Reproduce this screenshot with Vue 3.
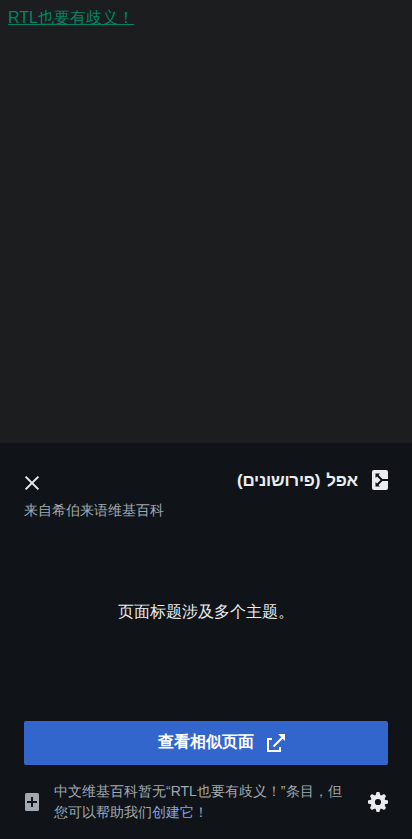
<script setup>
const message = '页面标题涉及多个主题。'
</script>

<template>
  <div class="screen">
    <main class="page">
      <a class="entry" href="#">RTL也要有歧义！</a>
    </main>
    <section class="panel">
      <header class="head">
        <svg class="close" width="20" height="20" viewBox="0 0 20 20" aria-hidden="true">
          <path d="m3.6 3.6 12.8 12.8M16.4 3.6 3.6 16.4" />
        </svg>
        <h1 class="title" dir="rtl">אפל (פירושונים)</h1>
        <svg class="disambig" width="16" height="20" viewBox="0 0 16 20" aria-hidden="true">
          <rect width="16" height="20" rx="2" fill="#eaecf0" />
          <path class="branch" d="M16 10H9.5M5 5l5 5-5 5" />
          <path class="tips" d="M3.5 3.5H8L3.5 8zM3.5 16.5V12L8 16.5z" />
        </svg>
      </header>
      <p class="source">来自希伯来语维基百科</p>
      <p class="message">{{ message }}</p>
      <button class="action" type="button">
        <span class="label">查看相似页面</span>
        <svg width="20" height="20" viewBox="0 0 20 20" fill="#fff" aria-hidden="true">
          <path d="M1 5h5v2H3v10h10v-3h2v5H1z" />
          <path d="M12 1h7v7l-2.3-2.3-8.5 8.5-1.4-1.4 8.5-8.5z" />
        </svg>
      </button>
      <footer class="foot">
        <svg class="add" width="16" height="20" viewBox="0 0 16 20" aria-hidden="true">
          <rect x="1" y="1" width="14" height="18" rx="1.5" fill="#a2a9b1" />
          <path d="M3 10h10M8 5v10" stroke="#101418" stroke-width="2" />
        </svg>
        <p class="note">中文维基百科暂无“RTL也要有歧义！”条目，但您可以帮助我们<a href="#">创建它</a>！</p>
        <svg class="gear" width="20" height="20" viewBox="0 0 20 20" fill="#eaecf0" aria-hidden="true">
          <g>
            <path v-for="n in 4" :key="n" d="M7.7 3 8.6 0h2.8l.9 3v14l-.9 3H8.6l-.9-3z" :transform="`rotate(${n * 45} 10 10)`" />
          </g>
          <circle cx="10" cy="10" r="7.3" />
          <circle cx="10" cy="10" r="3.1" fill="#101418" />
        </svg>
      </footer>
    </section>
  </div>
</template>

<style>
body {
  margin: 0;
  background: #101418;
}
</style>

<style scoped>
.screen {
  display: flex;
  flex-direction: column;
  height: 839px;
  overflow: hidden;
  font-family: "Liberation Sans", sans-serif;
  background: #101418;
}
.page {
  height: 443px;
  box-sizing: border-box;
  padding: 8px;
  background: #1c1d1e;
  font-size: 16px;
  line-height: 19px;
}
.entry {
  color: #008565;
}
.panel {
  display: flex;
  flex: 1;
  flex-direction: column;
  box-sizing: border-box;
  padding: 24px 24px 0;
}
.head {
  display: flex;
  height: 32px;
}
.close {
  margin: 6px 0 0 -2px;
  fill: none;
  stroke: #eaecf0;
  stroke-width: 2;
}
.title {
  flex: 1;
  margin: 0 14px 0 0;
  color: #eaecf0;
  font-size: 17px;
  font-weight: 700;
  line-height: 27px;
  letter-spacing: -0.22px;
  word-spacing: 1.6px;
}
.disambig {
  margin-top: 2.5px;
}
.branch {
  fill: none;
  stroke: #101418;
  stroke-width: 2;
}
.tips {
  fill: #101418;
}
.source {
  margin: 0;
  color: #a2a9b1;
  font-size: 14px;
  line-height: 22px;
}
.message {
  display: flex;
  align-items: center;
  justify-content: center;
  height: 182px;
  margin: 0 0 18px;
  color: #eaecf0;
  font-size: 16px;
}
.action {
  display: flex;
  align-items: center;
  justify-content: center;
  gap: 12px;
  flex: none;
  height: 44px;
  padding: 0 0 0 32px;
  border: 0;
  border-radius: 2px;
  background: #36c;
  color: #fff;
  font: 700 16px "Liberation Sans", sans-serif;
}
.label {
  padding-bottom: 2px;
}
.foot {
  display: flex;
  align-items: center;
  height: 42px;
  margin-top: 16px;
}
.note {
  width: 290px;
  margin: 0 auto 0 14px;
  color: #a2a9b1;
  font-size: 14px;
  line-height: 21px;
}
.note a {
  color: #88a3e8;
  text-decoration: none;
}
</style>
